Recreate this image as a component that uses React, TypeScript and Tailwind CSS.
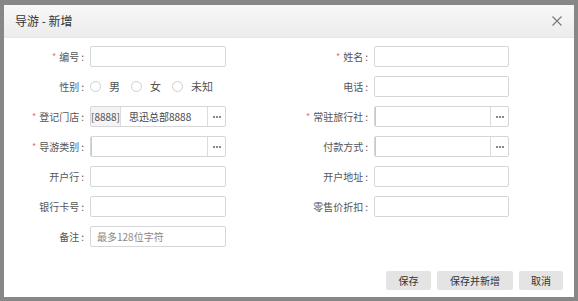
import type { ReactNode } from 'react'

const font = { fontFamily: '"Noto Sans CJK SC", "Microsoft YaHei", sans-serif' }

function Dots() {
  return (
    <div className="flex w-[18px] shrink-0 items-center justify-center gap-[1px] border-l border-[#dcdcdc]">
      <span className="h-[2px] w-[2px] bg-[#888]" />
      <span className="h-[2px] w-[2px] bg-[#888]" />
      <span className="h-[2px] w-[2px] bg-[#888]" />
    </div>
  )
}

function Label({ text, required, w }: { text: string; required?: boolean; w: string }) {
  return (
    <div className={`${w} flex shrink-0 items-center justify-end whitespace-nowrap pr-[6px] text-[10px] text-[#555]`}>
      {required && <span className="mr-[3px] text-[9px] text-[#f26b6b]">*</span>}
      <span>{text}</span>
      <span className="ml-[2px]">:</span>
    </div>
  )
}

function Box({ children, w }: { children?: ReactNode; w: string }) {
  return (
    <div className={`${w} flex h-[21px] shrink-0 overflow-hidden rounded-[2px] border border-[#d6d6d6] bg-white`}>
      {children}
    </div>
  )
}

function Radio({ text }: { text: string }) {
  return (
    <div className="mr-[11px] flex items-center gap-[8px] whitespace-nowrap">
      <span className="h-[11px] w-[11px] rounded-full border border-[#cfcfcf]" />
      <span className="text-[11px] text-[#555]">{text}</span>
    </div>
  )
}

function Row({ left, right }: { left: ReactNode; right?: ReactNode }) {
  return (
    <div className="flex h-[21px] items-center">
      <div className="flex w-[222px] items-center">{left}</div>
      <div className="flex items-center">{right}</div>
    </div>
  )
}

export default function App() {
  return (
    <div className="h-[301px] w-[578px] bg-[#878787] pb-[4px] pl-[4px] pr-[4px] pt-[5px]" style={font}>
      <div className="flex h-[292px] w-[570px] flex-col bg-white">
        <div className="flex h-[33px] items-center justify-between border-b border-[#e6e6e6] bg-gradient-to-b from-[#f8f8f8] to-[#ececec] pl-[11px] pr-[12px]">
          <span className="text-[12px] text-[#333]">导游 - 新增</span>
          <svg width="10" height="10" viewBox="0 0 10 10">
            <path d="M0.5 0.5 L9.5 9.5 M9.5 0.5 L0.5 9.5" stroke="#777" strokeWidth="1.1" />
          </svg>
        </div>

        <div className="flex flex-col gap-[9px] pt-[8px]">
          <Row
            left={<><Label text="编号" required w="w-[86px]" /><Box w="w-[136px]" /></>}
            right={<><Label text="姓名" required w="w-[148px]" /><Box w="w-[135px]" /></>}
          />
          <Row
            left={
              <>
                <Label text="性别" w="w-[86px]" />
                <Radio text="男" />
                <Radio text="女" />
                <Radio text="未知" />
              </>
            }
            right={<><Label text="电话" w="w-[148px]" /><Box w="w-[135px]" /></>}
          />
          <Row
            left={
              <>
                <Label text="登记门店" required w="w-[86px]" />
                <Box w="w-[136px]">
                  <div className="flex w-[30px] items-center justify-center border-r border-[#dcdcdc] bg-[#f4f4f4] text-[10px] text-[#555]">
                    [8888]
                  </div>
                  <div className="flex flex-1 items-center pl-[8px] text-[10px] text-[#444]">思迅总部8888</div>
                  <Dots />
                </Box>
              </>
            }
            right={
              <>
                <Label text="常驻旅行社" required w="w-[148px]" />
                <Box w="w-[135px]">
                  <div className="flex-1 border-l border-[#c8c8c8]" />
                  <Dots />
                </Box>
              </>
            }
          />
          <Row
            left={
              <>
                <Label text="导游类别" required w="w-[86px]" />
                <Box w="w-[136px]">
                  <div className="flex-1 border-l border-[#c8c8c8]" />
                  <Dots />
                </Box>
              </>
            }
            right={
              <>
                <Label text="付款方式" w="w-[148px]" />
                <Box w="w-[135px]">
                  <div className="flex-1 border-l border-[#c8c8c8]" />
                  <Dots />
                </Box>
              </>
            }
          />
          <Row
            left={<><Label text="开户行" w="w-[86px]" /><Box w="w-[136px]" /></>}
            right={<><Label text="开户地址" w="w-[148px]" /><Box w="w-[135px]" /></>}
          />
          <Row
            left={<><Label text="银行卡号" w="w-[86px]" /><Box w="w-[136px]" /></>}
            right={<><Label text="零售价折扣" w="w-[148px]" /><Box w="w-[135px]" /></>}
          />
          <Row
            left={
              <>
                <Label text="备注" w="w-[86px]" />
                <Box w="w-[136px]">
                  <div className="flex items-center pl-[6px] text-[10px] text-[#888]">最多128位字符</div>
                </Box>
              </>
            }
          />
        </div>

        <div className="mt-auto flex justify-end gap-[6px] pb-[7px] pr-[11px]">
          <button className="h-[19px] w-[45px] rounded-[2px] bg-[#e4e4e4] text-[10px] text-[#333]">保存</button>
          <button className="h-[19px] w-[76px] rounded-[2px] bg-[#e4e4e4] text-[10px] text-[#333]">保存并新增</button>
          <button className="h-[19px] w-[44px] rounded-[2px] bg-[#e4e4e4] text-[10px] text-[#333]">取消</button>
        </div>
      </div>
    </div>
  )
}
